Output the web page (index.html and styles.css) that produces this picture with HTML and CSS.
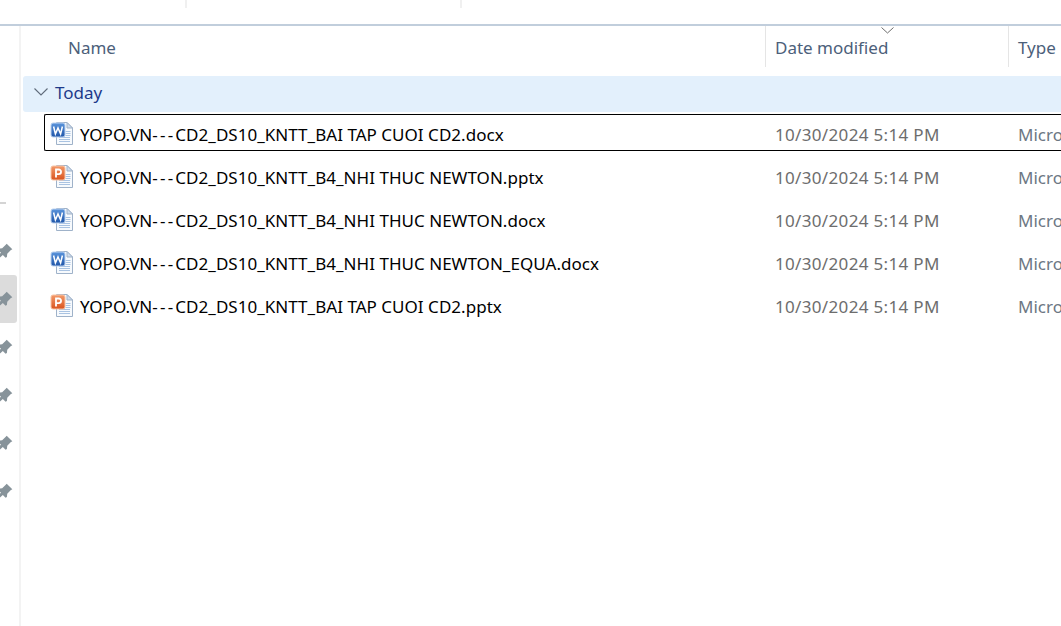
FILE: index.html
```html
<!DOCTYPE html>
<html lang="en">
<head>
<meta charset="utf-8">
<title>Today</title>
<link rel="stylesheet" href="styles.css">
</head>
<body>
<svg class="defs" width="0" height="0" aria-hidden="true">
  <defs>
    <linearGradient id="blue" x1="0" y1="0" x2="0" y2="1">
      <stop offset="0" stop-color="#5b95dc"/>
      <stop offset="1" stop-color="#1f55a8"/>
    </linearGradient>
    <linearGradient id="orange" x1="0" y1="0" x2="0" y2="1">
      <stop offset="0" stop-color="#f39a6a"/>
      <stop offset="1" stop-color="#d9531e"/>
    </linearGradient>
    <symbol id="page" viewBox="0 0 24 24">
      <path d="M6.500 1.500H17l5.500 5.500v16.500h-16z" fill="#f7fafd" stroke="#9fb2c9"/>
      <path d="M17 1.500V7h5.500z" fill="#cfdcec" stroke="#9fb2c9"/>
      <path d="M9 16.500h11M9 18.500h11M9 20.500h11M15.500 10.500h5M15.500 12.500h5M15.500 14.500h5" stroke="#a9c3e2"/>
    </symbol>
    <symbol id="word" viewBox="0 0 24 24">
      <use href="#page"/>
      <rect x="1" y="2" width="14" height="14" rx="2" fill="url(#blue)" stroke="#bcd2ef"/>
      <path d="M3.600 5.500l1.800 7.500 2.600-6 2.600 6 1.800-7.500" fill="none" stroke="#fff" stroke-width="1.500"/>
    </symbol>
    <symbol id="ppt" viewBox="0 0 24 24">
      <use href="#page"/>
      <rect x="1" y="2" width="14" height="14" rx="2" fill="url(#orange)" stroke="#f7c4a6"/>
      <path d="M6 13.500V5.500h2.700a2.300 2.300 0 0 1 0 4.700H6" fill="none" stroke="#fff" stroke-width="1.800"/>
    </symbol>
    <symbol id="pin" viewBox="0 0 16 16">
      <path d="M9.500 1.500l5 5-1.500 .8-3 3.200-.3 2.800-1.200 .700-2.400-2.400L2 15l-1-1 3.400-4.600-2.400-2.400.700-1.200 2.800-.3 3.200-3z" fill="#87939a"/>
    </symbol>
  </defs>
</svg>

<header class="topbar">
  <span class="crumb crumb-first"></span>
  <span class="crumb crumb-second"></span>
</header>

<div class="window">
  <aside class="rail">
    <div class="rail-rule"></div>
    <ul class="pins">
      <li class="pin"><svg class="pin-icon"><use href="#pin"/></svg></li>
      <li class="pin pin-active"><svg class="pin-icon"><use href="#pin"/></svg></li>
      <li class="pin"><svg class="pin-icon"><use href="#pin"/></svg></li>
      <li class="pin"><svg class="pin-icon"><use href="#pin"/></svg></li>
      <li class="pin"><svg class="pin-icon"><use href="#pin"/></svg></li>
      <li class="pin"><svg class="pin-icon"><use href="#pin"/></svg></li>
    </ul>
  </aside>

  <main class="list">
    <div class="columns">
      <div class="col col-name">Name</div>
      <div class="col col-date">Date modified
        <svg class="sort" width="13" height="7" viewBox="0 0 13 7"><path d="M.5 .5l6 5.500 6-5.500" fill="none" stroke="#6d6d6d"/></svg>
      </div>
      <div class="col col-type">Type</div>
    </div>

    <div class="group">
      <svg class="chevron" width="14" height="8" viewBox="0 0 14 8"><path d="M.5 .500l6.500 6.500 6.500-6.500" fill="none" stroke="#5f6b7a" stroke-width="1.100"/></svg>
      <span class="group-label">Today</span>
    </div>

    <div class="row row-focus">
      <span class="cell-name"><svg class="file-icon"><use href="#word"/></svg><span class="file-name">YOPO.VN<span class="dashes">---</span>CD2_DS10_KNTT_BAI TAP CUOI CD2.docx</span></span>
      <span class="cell-date">10/30/2024 5:14 PM</span>
      <span class="cell-type">Microsoft Word Document</span>
    </div>
    <div class="row">
      <span class="cell-name"><svg class="file-icon"><use href="#ppt"/></svg><span class="file-name">YOPO.VN<span class="dashes">---</span>CD2_DS10_KNTT_B4_NHI THUC NEWTON.pptx</span></span>
      <span class="cell-date">10/30/2024 5:14 PM</span>
      <span class="cell-type">Microsoft PowerPoint</span>
    </div>
    <div class="row">
      <span class="cell-name"><svg class="file-icon"><use href="#word"/></svg><span class="file-name">YOPO.VN<span class="dashes">---</span>CD2_DS10_KNTT_B4_NHI THUC NEWTON.docx</span></span>
      <span class="cell-date">10/30/2024 5:14 PM</span>
      <span class="cell-type">Microsoft Word Document</span>
    </div>
    <div class="row">
      <span class="cell-name"><svg class="file-icon"><use href="#word"/></svg><span class="file-name">YOPO.VN<span class="dashes">---</span>CD2_DS10_KNTT_B4_NHI THUC NEWTON_EQUA.docx</span></span>
      <span class="cell-date">10/30/2024 5:14 PM</span>
      <span class="cell-type">Microsoft Word Document</span>
    </div>
    <div class="row">
      <span class="cell-name"><svg class="file-icon"><use href="#ppt"/></svg><span class="file-name">YOPO.VN<span class="dashes">---</span>CD2_DS10_KNTT_BAI TAP CUOI CD2.pptx</span></span>
      <span class="cell-date">10/30/2024 5:14 PM</span>
      <span class="cell-type">Microsoft PowerPoint</span>
    </div>
  </main>
</div>
</body>
</html>
```

FILE: styles.css
```css
* { box-sizing: border-box; }
html, body { height: 100%; }
body {
  margin: 0;
  background: #fff;
  overflow: hidden;
  display: flex;
  flex-direction: column;
  font-family: "Noto Sans", "Open Sans", sans-serif;
  font-size: 17px;
  color: #000;
}
.defs { display: block; height: 0; }
ul { list-style: none; margin: 0; padding: 0; }

.topbar {
  height: 26px;
  flex: none;
  display: flex;
  border-bottom: 2px solid #c1cedc;
}
.crumb { height: 8px; border-right: 2px solid #f0f0f0; }
.crumb-first { width: 187px; }
.crumb-second { width: 275px; }

.window { flex: 1; display: flex; min-height: 0; }

.rail {
  width: 21px;
  flex: none;
  border-right: 2px solid #f3f3f3;
  padding-top: 176px;
}
.rail-rule { width: 6px; height: 2px; background: #d4d4d4; }
.pins { margin-top: 23px; width: 17px; }
.pin {
  height: 48px;
  display: flex;
  align-items: center;
  justify-content: flex-end;
  overflow: hidden;
}
.pin-active { background: #dcdcdc; border-radius: 0 3px 3px 0; }
.pin-icon { width: 18px; height: 18px; flex: none; margin-right: 3px; }

.list { flex: 1; min-width: 0; padding-left: 2px; overflow: hidden; }

.columns { height: 41px; display: flex; line-height: 44px; color: #4c607a; }
.col { height: 41px; white-space: nowrap; flex: none; }
.col-name { width: 742px; padding-left: 45px; }
.col-date { width: 243px; padding-left: 9px; border-left: 1px solid #e5e5e5; position: relative; }
.col-type { padding-left: 9px; border-left: 1px solid #e5e5e5; }
.sort { position: absolute; left: 115px; top: 1px; }

.group {
  margin-top: 9px;
  height: 36px;
  background: #e3f0fc;
  border-radius: 3px 0 0 3px;
  display: flex;
  align-items: center;
  padding: 0 0 4px 11px;
}
.group-label { margin-left: 7px; color: #1e3a8a; }

.row {
  height: 37px;
  margin: 2px 0 6px 21px;
  display: flex;
  align-items: center;
  white-space: nowrap;
  border: 1px solid transparent;
}
.row-focus { border-color: #000; border-right: 0; border-radius: 2px 0 0 2px; }
.cell-name { width: 730px; flex: none; display: flex; align-items: center; padding-left: 5px; }
.file-icon { width: 24px; height: 24px; flex: none; margin-right: 6px; }
.file-name { letter-spacing: .03px; padding-top: 4px; }
.dashes { letter-spacing: 2.2px; }
.cell-date { width: 243px; flex: none; color: #6d6d6d; letter-spacing: .33px; padding-top: 4px; }
.cell-type { color: #6d7783; padding-top: 4px; }
```
